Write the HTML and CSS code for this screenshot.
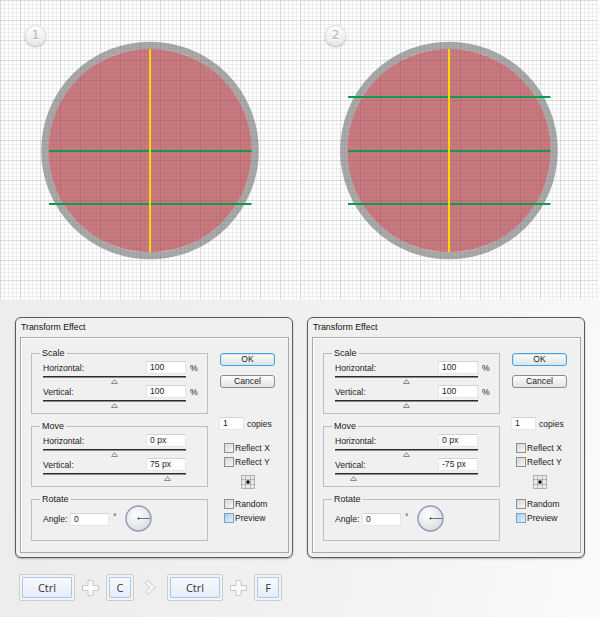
FILE: index.html
```html
<!DOCTYPE html>
<html>
<head>
<meta charset="utf-8">
<link rel="stylesheet" href="styles.css">
</head>
<body>
<div class="figures">
  <div class="panel">
    <span class="badge">1</span>
    <svg class="art" width="298" height="300" viewBox="0 0 298 300">
      <circle class="ring" cx="150" cy="150.5" r="105.3"/>
      <circle class="disc" cx="150" cy="150.5" r="101.8"/>
      <line class="hline" x1="49" y1="151" x2="251.5" y2="151"/>
      <line class="hline" x1="49" y1="204" x2="251.5" y2="204"/>
      <line class="vline" x1="150" y1="49" x2="150" y2="252.5"/>
    </svg>
  </div>
  <div class="panel">
    <span class="badge">2</span>
    <svg class="art" width="298" height="300" viewBox="0 0 298 300">
      <circle class="ring" cx="149" cy="150.5" r="105.3"/>
      <circle class="disc" cx="149" cy="150.5" r="101.8"/>
      <line class="hline" x1="48" y1="97" x2="250.5" y2="97"/>
      <line class="hline" x1="48" y1="151" x2="250.5" y2="151"/>
      <line class="hline" x1="48" y1="204" x2="250.5" y2="204"/>
      <line class="vline" x1="149" y1="49" x2="149" y2="252.5"/>
    </svg>
  </div>
</div>

<div class="lower">
  <div class="dialogs">
    <div class="dialog">
      <div class="title">Transform Effect</div>
      <div class="body">
        <div class="left">
          <fieldset class="group">
            <legend>Scale</legend>
            <div class="row"><span class="lbl">Horizontal:</span><span class="field">100</span><span class="unit">%</span></div>
            <div class="slider"></div>
            <div class="mark"><svg width="7" height="5" style="margin-left:68px"><polygon points="3.5,0.5 6.5,4.5 0.5,4.5"/></svg></div>
            <div class="row"><span class="lbl">Vertical:</span><span class="field">100</span><span class="unit">%</span></div>
            <div class="slider"></div>
            <div class="mark"><svg width="7" height="5" style="margin-left:68px"><polygon points="3.5,0.5 6.5,4.5 0.5,4.5"/></svg></div>
          </fieldset>
          <fieldset class="group">
            <legend>Move</legend>
            <div class="row"><span class="lbl">Horizontal:</span><span class="field">0 px</span><span class="unit"></span></div>
            <div class="slider"></div>
            <div class="mark"><svg width="7" height="5" style="margin-left:68px"><polygon points="3.5,0.5 6.5,4.5 0.5,4.5"/></svg></div>
            <div class="row"><span class="lbl">Vertical:</span><span class="field">75 px</span><span class="unit"></span></div>
            <div class="slider"></div>
            <div class="mark"><svg width="7" height="5" style="margin-left:121px"><polygon points="3.5,0.5 6.5,4.5 0.5,4.5"/></svg></div>
          </fieldset>
          <fieldset class="group rotate">
            <legend>Rotate</legend>
            <div class="rot">
              <span class="lbl">Angle:</span><span class="field">0</span><span class="deg">°</span>
              <svg class="dial" width="27" height="27" viewBox="0 0 27 27">
                <defs><radialGradient id="dg1" cx="40%" cy="35%" r="70%"><stop offset="0" stop-color="#ffffff"/><stop offset="1" stop-color="#d9dbe0"/></radialGradient></defs>
                <circle cx="13.5" cy="13.5" r="12.5" fill="url(#dg1)" stroke="#8f99b5" stroke-width="1.4"/>
                <line x1="13.5" y1="13.5" x2="25" y2="13.5" stroke="#555" stroke-width="0.8"/>
                <circle cx="13.5" cy="13.5" r="0.9" fill="#333"/>
              </svg>
            </div>
          </fieldset>
        </div>
        <div class="right">
          <div class="btn ok">OK</div>
          <div class="btn">Cancel</div>
          <div class="copies"><span class="field">1</span><span class="word">copies</span></div>
          <div class="check cx"><span class="box"></span>Reflect X</div>
          <div class="check cy"><span class="box"></span>Reflect Y</div>
          <svg class="refpt" width="14" height="14" viewBox="0 0 14 14">
            <rect x="0.5" y="0.5" width="13" height="13" fill="#e9e9e9" stroke="#7a7a7a" stroke-dasharray="1 1"/>
            <path d="M4.5 0.5 V13.5 M9.5 0.5 V13.5 M0.5 4.5 H13.5 M0.5 9.5 H13.5" stroke="#8a8a8a" stroke-dasharray="1 1" fill="none"/>
            <rect x="5.5" y="5.5" width="3" height="3" fill="#000"/>
          </svg>
          <div class="check cr"><span class="box"></span>Random</div>
          <div class="check cp"><span class="box on"></span>Preview</div>
        </div>
      </div>
    </div>

    <div class="dialog">
      <div class="title">Transform Effect</div>
      <div class="body">
        <div class="left">
          <fieldset class="group">
            <legend>Scale</legend>
            <div class="row"><span class="lbl">Horizontal:</span><span class="field">100</span><span class="unit">%</span></div>
            <div class="slider"></div>
            <div class="mark"><svg width="7" height="5" style="margin-left:68px"><polygon points="3.5,0.5 6.5,4.5 0.5,4.5"/></svg></div>
            <div class="row"><span class="lbl">Vertical:</span><span class="field">100</span><span class="unit">%</span></div>
            <div class="slider"></div>
            <div class="mark"><svg width="7" height="5" style="margin-left:68px"><polygon points="3.5,0.5 6.5,4.5 0.5,4.5"/></svg></div>
          </fieldset>
          <fieldset class="group">
            <legend>Move</legend>
            <div class="row"><span class="lbl">Horizontal:</span><span class="field">0 px</span><span class="unit"></span></div>
            <div class="slider"></div>
            <div class="mark"><svg width="7" height="5" style="margin-left:68px"><polygon points="3.5,0.5 6.5,4.5 0.5,4.5"/></svg></div>
            <div class="row"><span class="lbl">Vertical:</span><span class="field">-75 px</span><span class="unit"></span></div>
            <div class="slider"></div>
            <div class="mark"><svg width="7" height="5" style="margin-left:15px"><polygon points="3.5,0.5 6.5,4.5 0.5,4.5"/></svg></div>
          </fieldset>
          <fieldset class="group rotate">
            <legend>Rotate</legend>
            <div class="rot">
              <span class="lbl">Angle:</span><span class="field">0</span><span class="deg">°</span>
              <svg class="dial" width="27" height="27" viewBox="0 0 27 27">
                <defs><radialGradient id="dg2" cx="40%" cy="35%" r="70%"><stop offset="0" stop-color="#ffffff"/><stop offset="1" stop-color="#d9dbe0"/></radialGradient></defs>
                <circle cx="13.5" cy="13.5" r="12.5" fill="url(#dg2)" stroke="#8f99b5" stroke-width="1.4"/>
                <line x1="13.5" y1="13.5" x2="25" y2="13.5" stroke="#555" stroke-width="0.8"/>
                <circle cx="13.5" cy="13.5" r="0.9" fill="#333"/>
              </svg>
            </div>
          </fieldset>
        </div>
        <div class="right">
          <div class="btn ok">OK</div>
          <div class="btn">Cancel</div>
          <div class="copies"><span class="field">1</span><span class="word">copies</span></div>
          <div class="check cx"><span class="box"></span>Reflect X</div>
          <div class="check cy"><span class="box"></span>Reflect Y</div>
          <svg class="refpt" width="14" height="14" viewBox="0 0 14 14">
            <rect x="0.5" y="0.5" width="13" height="13" fill="#e9e9e9" stroke="#7a7a7a" stroke-dasharray="1 1"/>
            <path d="M4.5 0.5 V13.5 M9.5 0.5 V13.5 M0.5 4.5 H13.5 M0.5 9.5 H13.5" stroke="#8a8a8a" stroke-dasharray="1 1" fill="none"/>
            <rect x="5.5" y="5.5" width="3" height="3" fill="#000"/>
          </svg>
          <div class="check cr"><span class="box"></span>Random</div>
          <div class="check cp"><span class="box on"></span>Preview</div>
        </div>
      </div>
    </div>
  </div>

  <div class="keys">
    <div class="key wide"><span>Ctrl</span></div>
    <svg class="plus" width="17" height="16" viewBox="0 0 17 16"><path d="M6 0.5 H11 V5.5 H16.5 V10.5 H11 V15.5 H6 V10.5 H0.5 V5.5 H6 Z"/></svg>
    <div class="key small"><span>C</span></div>
    <svg class="chev" width="13" height="15" viewBox="0 0 13 15"><polygon points="1,3 4,0.7 11.5,7.5 4,14.3 1,12 6,7.5"/></svg>
    <div class="key wide"><span>Ctrl</span></div>
    <svg class="plus" width="17" height="16" viewBox="0 0 17 16"><path d="M6 0.5 H11 V5.5 H16.5 V10.5 H11 V15.5 H6 V10.5 H0.5 V5.5 H6 Z"/></svg>
    <div class="key small"><span>F</span></div>
  </div>
</div>
</body>
</html>
```

FILE: styles.css
```css
* { box-sizing: border-box; }
html, body { margin: 0; padding: 0; }
body {
  width: 600px;
  height: 617px;
  overflow: hidden;
  background: #f6f6f6;
  font-family: "Liberation Sans", Arial, sans-serif;
}

/* ---------- figures ---------- */
.figures {
  display: flex;
  gap: 2px;
  height: 300px;
  background: #fbfbfb;
}
.panel {
  position: relative;
  width: 298px;
  height: 300px;
  background-color: #fdfdfd;
  background-image:
    linear-gradient(to right, rgba(0,0,0,0.075) 1px, transparent 1px),
    linear-gradient(to bottom, rgba(0,0,0,0.075) 1px, transparent 1px),
    linear-gradient(to right, rgba(0,0,0,0.05) 1px, transparent 1px),
    linear-gradient(to bottom, rgba(0,0,0,0.05) 1px, transparent 1px);
  background-size: 20px 20px, 20px 20px, 4px 4px, 4px 4px;
}
.badge {
  position: absolute;
  left: 25px;
  top: 25px;
  width: 21px;
  height: 21px;
  border-radius: 50%;
  background: linear-gradient(#ffffff, #e6e6e6);
  box-shadow: 0 1px 2px rgba(0,0,0,0.3), inset 0 0 0 1px #e0e0e0;
  color: #b2b2b2;
  font: 12px/21px "DejaVu Sans", sans-serif;
  text-align: center;
  text-shadow: 0 1px 0 #fff;
}
.art { display: block; }
.ring { fill: none; stroke: rgba(85,85,85,0.5); stroke-width: 7; }
.disc { fill: rgba(160,30,40,0.58); }
.hline { stroke: #0f9a4c; stroke-width: 2.2; }
.vline { stroke: #ffd500; stroke-width: 2; }

/* ---------- lower area ---------- */
.lower {
  height: 317px;
  padding-top: 17px;
  background: linear-gradient(100deg, #ececec 0%, #f1f1f1 55%, #fafafa 100%);
}
.dialogs {
  display: flex;
  gap: 14px;
  padding-left: 15px;
}
.dialog {
  width: 278px;
  border: 1px solid #5a5a5a;
  border-radius: 6px;
  background: #f0f0f0;
  box-shadow: 0 1px 2px rgba(0,0,0,0.25);
  font-size: 8.6px;
  color: #1a1a1a;
}
.title {
  height: 19px;
  line-height: 19px;
  padding-left: 5px;
  font-size: 8.8px;
  color: #111;
}
.body {
  display: flex;
  margin: 0 3px 4px 4px;
  border: 1px solid #a9a9a9;
  box-shadow: inset 1px 1px 0 #fff;
  padding: 10px 12px 11px 10px;
}
.left {
  width: 177px;
  display: flex;
  flex-direction: column;
  gap: 7px;
}
.group {
  margin: 0;
  min-width: 0;
  padding: 3px 0 4px 11px;
  border: 1px solid #bfbfbf;
}
.group legend {
  margin-left: -3px;
  padding: 0 2px;
  font-size: 9px;
  line-height: 10px;
}
.group.rotate { padding: 2px 0 8px 11px; }

.row {
  display: flex;
  align-items: center;
  width: 157px;
  height: 13px;
}
.lbl { flex: 1; }
.field {
  display: block;
  width: 40px;
  height: 13px;
  background: #fff;
  border: 1px solid #e6e6e6;
  border-top-color: #d2d2d2;
  padding-left: 3px;
  line-height: 11px;
  color: #1b1b3a;
}
.unit { width: 14px; padding-left: 4px; }
.slider {
  width: 143px;
  height: 2px;
  margin-top: 2px;
  border-top: 1px solid #2b2b2b;
  border-bottom: 1px solid #8a8a8a;
}
.mark { height: 7px; padding-top: 1px; }
.mark svg { display: block; }
.mark polygon { fill: #ececec; stroke: #8a8a8a; stroke-width: 1; }

.rot {
  display: flex;
  align-items: center;
  height: 26px;
}
.rot .lbl { flex: none; width: 27px; }
.rot .field { width: 39px; }
.deg { width: 12px; padding-left: 4px; align-self: flex-start; margin-top: 6px; }
.dial { display: block; margin-left: 4px; margin-top: -1px; }

/* right column */
.right {
  width: 56px;
  margin-left: 11px;
  padding-top: 5px;
  display: flex;
  flex-direction: column;
}
.btn {
  width: 55px;
  height: 13px;
  margin-left: 1px;
  border: 1px solid #8c8c8c;
  border-radius: 3px;
  background: linear-gradient(#fdfdfd, #e2e2e2);
  text-align: center;
  line-height: 11px;
}
.btn.ok {
  border-color: #4aa3df;
  box-shadow: inset 0 0 0 1px #cde8f8;
}
.btn + .btn { margin-top: 9px; }
.copies {
  display: flex;
  align-items: center;
  height: 13px;
  margin-top: 29px;
}
.copies .field { width: 25px; }
.word { margin-left: 3px; }
.check {
  display: flex;
  align-items: center;
  height: 10px;
  margin-left: 5px;
  white-space: nowrap;
}
.box {
  width: 10px;
  height: 10px;
  margin-right: 1px;
  border: 1px solid #8f8f8f;
  background: linear-gradient(135deg, #d6d6d6, #f7f7f7);
}
.box.on {
  border-color: #7aa3c8;
  background: linear-gradient(135deg, #a8cdee, #e2f0fb);
}
.cx { margin-top: 13px; }
.cy { margin-top: 4px; }
.refpt { display: block; margin: 8px 0 0 22px; }
.cr { margin-top: 10px; }
.cp { margin-top: 4px; }

/* ---------- keys ---------- */
.keys {
  display: flex;
  align-items: center;
  gap: 7px;
  margin-top: 16px;
  padding-left: 19px;
}
.key {
  height: 27px;
  padding: 2px;
  border: 1px solid #cdcdcd;
  border-radius: 2px;
  background: #f4f4f4;
}
.key span {
  display: flex;
  align-items: center;
  justify-content: center;
  height: 21px;
  border: 1px solid #a9c8ee;
  border-radius: 1px;
  background: linear-gradient(#f9fbfe, #e5ecf7);
  font: 11px "Open Sans", sans-serif;
  color: #333;
}
.key.wide { width: 56px; }
.key.small { width: 28px; }
.plus path { fill: #fafafa; stroke: #c9c9c9; stroke-width: 1; }
.chev { margin: 0 3px; }
.chev polygon { fill: #f6f6f6; stroke: #c9c9c9; stroke-width: 1; }
```
